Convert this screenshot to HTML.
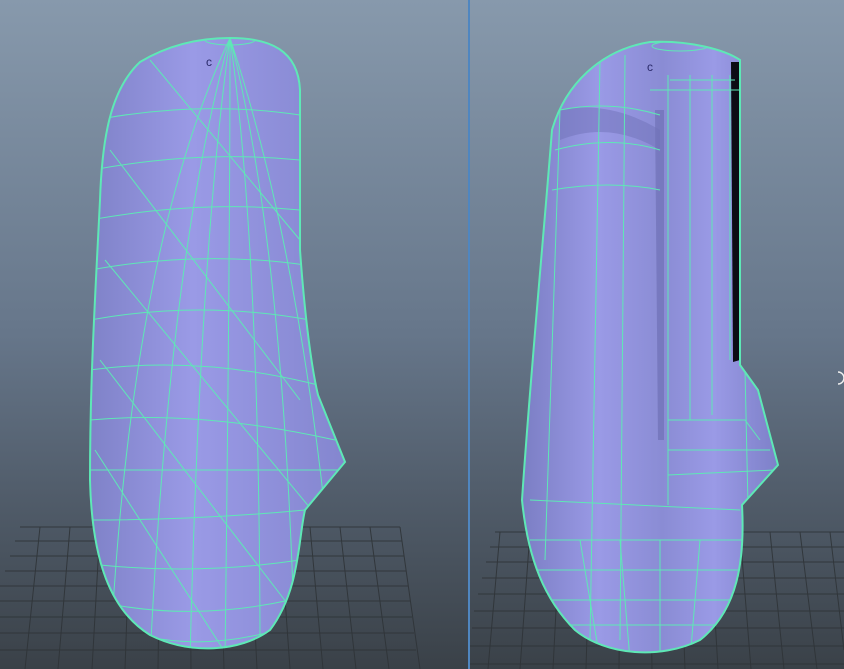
<!DOCTYPE html>
<html><head><style>
html,body{margin:0;padding:0;width:844px;height:669px;overflow:hidden;background:#5a6672}
svg{display:block}
</style></head><body>
<svg width="844" height="669" viewBox="0 0 844 669" xmlns="http://www.w3.org/2000/svg">
<defs>
<linearGradient id="bg" x1="0" y1="0" x2="0" y2="1">
<stop offset="0" stop-color="#8799ac"/><stop offset="0.5" stop-color="#66768a"/><stop offset="1" stop-color="#3a4148"/>
</linearGradient>
<linearGradient id="bodyL" x1="0" y1="0" x2="1" y2="0">
<stop offset="0" stop-color="#7f82c8"/><stop offset="0.4" stop-color="#9a9ae6"/><stop offset="1" stop-color="#8486cf"/>
</linearGradient>
<linearGradient id="bodyR" x1="0" y1="0" x2="1" y2="0">
<stop offset="0" stop-color="#7b7ec4"/><stop offset="0.3" stop-color="#9a9ae6"/><stop offset="0.55" stop-color="#8a8cd4"/><stop offset="0.75" stop-color="#9a9ae6"/><stop offset="1" stop-color="#7d80c8"/>
</linearGradient>
<clipPath id="cl"><path id="L" d="M230,38 C270,38 298,50 300,90 L300,250 C305,320 312,370 318,395 L345,462 L305,510 C298,540 300,590 270,630 C240,652 190,655 150,635 C110,610 92,560 90,480 C90,380 95,300 100,200 C102,140 110,90 140,62 C170,44 200,38 230,38 Z"/></clipPath>
<clipPath id="cr"><path id="R" d="M650,42 C690,40 725,50 740,60 L740,365 L758,390 L778,465 L742,505 C745,560 738,610 700,640 C660,660 605,655 575,630 C545,600 528,560 522,500 C530,380 545,220 552,130 C565,85 600,50 650,42 Z"/></clipPath>
</defs>
<rect width="844" height="669" fill="url(#bg)"/>
<rect x="468" y="0" width="2" height="669" fill="#4f86c0"/>
<g stroke="#2f3438" stroke-width="1" fill="none" opacity="0.9">
<path d="M20,527 L400,527 M15,541 L402,541 M10,556 L404,556 M5,571 L406,571 M0,586 L408,586 M0,601 L410,601 M0,617 L412,617 M0,633 L414,633 M0,650 L416,650"/>
<path d="M40,527 L25,669 M70,527 L58,669 M100,527 L92,669 M130,527 L125,669 M160,527 L158,669 M190,527 L191,669 M220,527 L224,669 M250,527 L257,669 M280,527 L290,669 M310,527 L323,669 M340,527 L356,669 M370,527 L389,669 M400,527 L420,669"/>
<path d="M495,532 L844,532 M490,547 L844,547 M486,562 L844,562 M482,578 L844,578 M478,594 L844,594 M474,611 L844,611 M472,628 L844,628 M470,646 L844,646 M470,664 L844,664"/>
<path d="M500,532 L488,669 M530,532 L520,669 M560,532 L553,669 M590,532 L586,669 M620,532 L619,669 M650,532 L652,669 M680,532 L685,669 M710,532 L718,669 M740,532 L751,669 M770,532 L784,669 M800,532 L817,669 M830,532 L844,650"/>
</g>
<use href="#L" fill="url(#bodyL)"/>
<g clip-path="url(#cl)" stroke="#5ee8b6" stroke-width="1" fill="none">
<path d="M95,120 Q200,100 300,115 M92,170 Q200,150 300,160 M90,220 Q200,200 300,210 M90,270 Q200,250 305,265 M90,320 Q200,300 310,320 M90,370 Q200,355 318,385 M90,420 Q200,410 335,440 M90,470 Q200,470 340,470 M92,520 Q200,520 305,510 M100,565 Q200,575 300,560 M115,605 Q200,620 290,600 M140,635 Q200,650 270,632"/>
<path d="M230,38 Q130,250 110,660 M230,38 Q170,250 150,660 M230,38 Q200,250 190,660 M230,38 Q230,250 225,660 M230,38 Q260,250 260,660 M230,38 Q285,250 295,660 M230,38 Q300,250 330,560"/>
<path d="M110,150 L300,400 M105,260 L320,520 M100,360 L300,620 M150,60 L300,240 M95,450 L230,660"/>
<ellipse cx="230" cy="40" rx="25" ry="5"/>
</g>
<use href="#L" fill="none" stroke="#5ee8b6" stroke-width="2"/>
<text x="206" y="66" font-family="Liberation Sans, sans-serif" font-size="12" fill="#2a2a6a">c</text>
<use href="#R" fill="url(#bodyR)"/>
<g clip-path="url(#cr)">
<path d="M655,110 L664,110 L664,440 L658,440 Z" fill="#6a6cb0" opacity="0.6"/>
<path d="M560,110 Q610,100 660,130 L660,150 Q610,120 560,140 Z" fill="#7072b8" opacity="0.5"/>
</g>
<path d="M731,62 L740,62 L740,360 L733,362 Z" fill="#0c0c14"/>
<g clip-path="url(#cr)" stroke="#5ee8b6" stroke-width="1" fill="none">
<path d="M690,75 L690,420 M668,75 L668,505 M712,75 L712,415 M730,75 L730,360 M600,60 L590,640 M560,110 L545,560 M625,55 L620,640"/>
<path d="M560,110 Q610,100 660,115 M555,150 Q610,135 660,150 M552,190 Q610,180 660,190 M670,80 L735,80 M650,90 L740,90 M668,420 L745,420 L760,440 M668,450 L770,450 M668,475 L775,470 M530,540 L745,540 M535,570 L742,570 M545,600 L738,600 M565,625 L725,625 M745,370 L748,505"/>
<path d="M580,540 L600,660 M620,540 L630,660 M660,540 L660,660 M700,540 L690,660 M530,500 L740,510"/>
<ellipse cx="680" cy="46" rx="28" ry="5"/>
</g>
<use href="#R" fill="none" stroke="#5ee8b6" stroke-width="2"/>
<text x="647" y="71" font-family="Liberation Sans, sans-serif" font-size="12" fill="#2a2a6a">c</text>
<path d="M838,372 a6,6 0 1 1 0,12" stroke="#eee" stroke-width="1.5" fill="none"/>
</svg>
</body></html>
